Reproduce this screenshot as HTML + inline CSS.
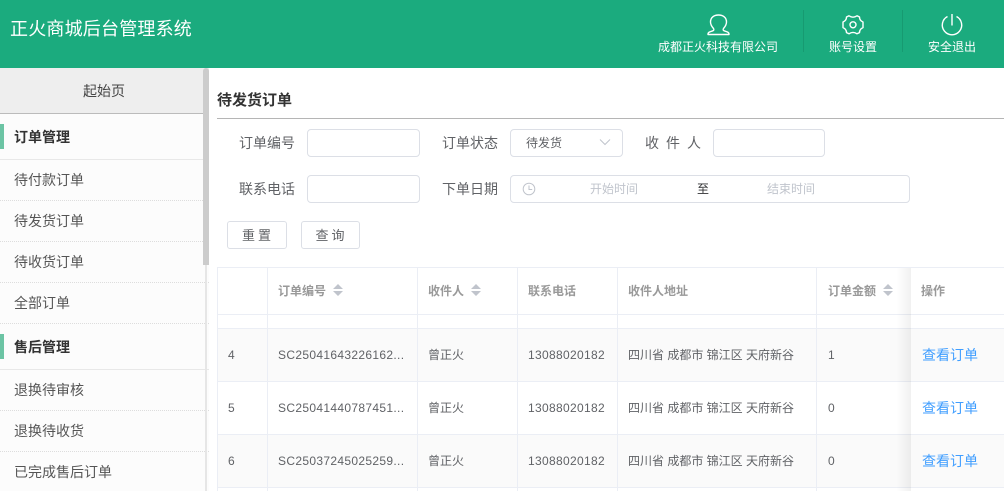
<!DOCTYPE html>
<html lang="zh-CN"><head><meta charset="utf-8"><title>待发货订单</title>
<style>
*{box-sizing:border-box}
html,body{margin:0;padding:0;width:1004px;height:491px;overflow:hidden;background:#fff;font-family:"Liberation Sans","Noto Sans CJK SC",sans-serif;font-size:14px;color:#606266}
.a{position:absolute;white-space:nowrap}
.hd{left:0;top:0;width:1004px;height:68px;background:#1bab7e}
.ht{color:#fff;font-size:12px;line-height:16px;text-align:center;top:39px}
.sep{top:10px;width:1px;height:42px;background:#179a71}
.side{left:0;top:68px;width:209px;height:423px;background:#fcfcfc}
.m{left:14px;font-size:14px;color:#555;line-height:18px}
.g{left:14px;font-size:14px;color:#333;line-height:18px;font-weight:700}
.dot{left:0;width:209px;height:0;border-top:1px dotted #ddd}
.sol{left:0;width:209px;height:1px;background:#e8e8e8}
.bar{left:0;width:4px;height:25px;background:#6cc4a4}
.lb{font-size:14px;color:#606266;line-height:18px}
.ip{background:#fff;border:1px solid #dcdfe6;border-radius:4px;height:28px}
.btn{background:#fff;border:1px solid #dcdfe6;border-radius:3px;height:28px;font-size:13px;color:#606266;line-height:28px;text-align:center;padding-left:2px}
.hl{left:218px;width:786px;height:1px;background:#ebeef5}
.vl{top:267px;width:1px;height:224px;background:#ebeef5}
.th{top:283px;font-size:12px;font-weight:700;color:#999;line-height:17px}
.td{font-size:12px;color:#606266;line-height:17px}
.n{letter-spacing:.33px}
.lk{left:922px;font-size:14px;color:#409eff;line-height:18px}
.so{width:10px;height:14px}
</style></head><body>
<div class="a hd"></div>
<div class="a" style="left:10px;top:17px;color:#fff;font-size:18px;line-height:24px;letter-spacing:.2px">正火商城后台管理系统</div>

<svg class="a" style="left:706px;top:13px" width="26" height="24" viewBox="0 0 26 24" fill="none" stroke="#fff" stroke-width="1.4" stroke-linejoin="round"><path d="M12.500 2C8 2 4.500 4.500 4.500 9C4.500 12 6 13.800 7.500 15.500C8.300 16.500 7.800 17.500 6.800 17.800L3.500 19C2.500 19.500 2 20 2 21V21.500H23V21C23 20 22.500 19.500 21.500 19L18.200 17.800C17.200 17.500 16.700 16.500 17.500 15.500C19 13.800 20.500 12 20.500 9C20.500 4.500 17 2 12.500 2Z"/></svg>
<div class="a ht" style="left:658px;width:120px">成都正火科技有限公司</div>
<div class="a sep" style="left:803px"></div>
<svg class="a" style="left:841px;top:14px" width="24" height="22" viewBox="0 0 24 22" fill="none" stroke="#fff" stroke-width="1.4" stroke-linejoin="round"><path d="M8 1.800Q12 4.500 16 1.800L18.500 3Q18.500 6.500 22 8V13.600Q18.500 15 18.500 18.600L16 19.800Q12 17.100 8 19.800L5.500 18.600Q5.500 15 2 13.600V8Q5.500 6.500 5.500 3Z"/><circle cx="12" cy="10.800" r="3"/></svg>
<div class="a ht" style="left:829px;width:48px">账号设置</div>
<div class="a sep" style="left:902px"></div>
<svg class="a" style="left:940px;top:13px" width="24" height="24" viewBox="0 0 24 24" fill="none" stroke="#fff" stroke-width="1.4"><path d="M7.500 3.500a9.700 9.700 0 1 0 9 0"/><path d="M12 1v11.500"/></svg>
<div class="a ht" style="left:928px;width:48px">安全退出</div>

<div class="a side"></div>
<div class="a" style="left:0;top:68px;width:209px;height:45px;background:#eee"></div>
<div class="a" style="left:0;top:113px;width:209px;height:1px;background:#bbb"></div>
<div class="a" style="left:83px;top:82px;font-size:14px;color:#444;line-height:18px">起始页</div>

<div class="a bar" style="top:124px"></div>
<div class="a g" style="top:128px">订单管理</div>
<div class="a sol" style="top:159px"></div>
<div class="a m" style="top:171px">待付款订单</div>
<div class="a dot" style="top:200px"></div>
<div class="a m" style="top:212px">待发货订单</div>
<div class="a dot" style="top:241px"></div>
<div class="a m" style="top:253px">待收货订单</div>
<div class="a dot" style="top:282px"></div>
<div class="a m" style="top:294px">全部订单</div>
<div class="a dot" style="top:323px"></div>
<div class="a bar" style="top:334px"></div>
<div class="a g" style="top:338px">售后管理</div>
<div class="a sol" style="top:369px"></div>
<div class="a m" style="top:381px">退换待审核</div>
<div class="a dot" style="top:410px"></div>
<div class="a m" style="top:422px">退换待收货</div>
<div class="a dot" style="top:451px"></div>
<div class="a m" style="top:463px">已完成售后订单</div>
<div class="a" style="left:205px;top:265px;width:2px;height:226px;background:#e6e6e6"></div>
<div class="a" style="left:203px;top:68px;width:6px;height:197px;background:#ccc;border-radius:3px 3px 0 0"></div>

<div class="a" style="left:217px;top:92px;font-size:15px;font-weight:700;color:#333;line-height:18px">待发货订单</div>
<div class="a" style="left:217px;top:118px;width:787px;height:1px;background:#b5b5b5"></div>

<div class="a lb" style="left:239px;top:134px">订单编号</div>
<div class="a ip" style="left:307px;top:129px;width:113px"></div>
<div class="a lb" style="left:442px;top:134px">订单状态</div>
<div class="a ip" style="left:510px;top:129px;width:113px"></div>
<div class="a" style="left:526px;top:135px;font-size:12px;color:#606266;line-height:17px">待发货</div>
<svg class="a" style="left:599px;top:138px" width="12" height="8" viewBox="0 0 12 8" fill="none" stroke="#c0c4cc"><path d="M1 1.500l5 5 5-5"/></svg>
<div class="a lb" style="left:645px;top:134px;letter-spacing:7px">收件人</div>
<div class="a ip" style="left:713px;top:129px;width:112px"></div>

<div class="a lb" style="left:239px;top:180px">联系电话</div>
<div class="a ip" style="left:307px;top:175px;width:113px"></div>
<div class="a lb" style="left:442px;top:180px">下单日期</div>
<div class="a ip" style="left:510px;top:175px;width:400px"></div>
<svg class="a" style="left:522px;top:182px" width="14" height="14" viewBox="0 0 14 14" fill="none" stroke="#c0c4cc"><circle cx="7" cy="7" r="5.800"/><path d="M7 3.500V7.500h3.200"/></svg>
<div class="a" style="left:590px;top:181px;font-size:12px;color:#c0c4cc;line-height:17px">开始时间</div>
<div class="a" style="left:697px;top:181px;font-size:12px;color:#303133;line-height:17px">至</div>
<div class="a" style="left:767px;top:181px;font-size:12px;color:#c0c4cc;line-height:17px">结束时间</div>

<div class="a btn" style="left:227px;top:221px;width:60px;letter-spacing:3px">重置</div>
<div class="a btn" style="left:301px;top:221px;width:59px;letter-spacing:3px">查询</div>

<div class="a" style="left:218px;top:329px;width:786px;height:52px;background:#fafafa"></div>
<div class="a" style="left:218px;top:435px;width:786px;height:52px;background:#fafafa"></div>
<div class="a hl" style="top:267px"></div>
<div class="a hl" style="top:314px"></div>
<div class="a hl" style="top:328px"></div>
<div class="a hl" style="top:381px"></div>
<div class="a hl" style="top:434px"></div>
<div class="a hl" style="top:487px"></div>
<div class="a vl" style="left:217px"></div>
<div class="a vl" style="left:267px"></div>
<div class="a vl" style="left:417px"></div>
<div class="a vl" style="left:517px"></div>
<div class="a vl" style="left:617px"></div>
<div class="a vl" style="left:816px"></div>
<div class="a" style="left:896px;top:268px;width:15px;height:223px;background:linear-gradient(to right,rgba(0,0,0,0),rgba(0,0,0,.06))"></div>

<div class="a th" style="left:278px">订单编号</div>
<svg class="a so" style="left:333px;top:283px" viewBox="0 0 10 14" fill="#c0c4cc"><path d="M5 1l5 5H0zM5 13l5-5H0z"/></svg>
<div class="a th" style="left:428px">收件人</div>
<svg class="a so" style="left:471px;top:283px" viewBox="0 0 10 14" fill="#c0c4cc"><path d="M5 1l5 5H0zM5 13l5-5H0z"/></svg>
<div class="a th" style="left:528px">联系电话</div>
<div class="a th" style="left:628px">收件人地址</div>
<div class="a th" style="left:828px">订单金额</div>
<svg class="a so" style="left:883px;top:283px" viewBox="0 0 10 14" fill="#c0c4cc"><path d="M5 1l5 5H0zM5 13l5-5H0z"/></svg>
<div class="a th" style="left:921px">操作</div>

<div class="a td" style="left:228px;top:347px">4</div>
<div class="a td n" style="left:278px;top:347px">SC25041643226162...</div>
<div class="a td" style="left:428px;top:347px">曾正火</div>
<div class="a td n" style="left:528px;top:347px">13088020182</div>
<div class="a td" style="left:628px;top:347px">四川省 成都市 锦江区 天府新谷</div>
<div class="a td" style="left:828px;top:347px">1</div>
<div class="a lk" style="top:346px">查看订单</div>

<div class="a td" style="left:228px;top:400px">5</div>
<div class="a td n" style="left:278px;top:400px">SC25041440787451...</div>
<div class="a td" style="left:428px;top:400px">曾正火</div>
<div class="a td n" style="left:528px;top:400px">13088020182</div>
<div class="a td" style="left:628px;top:400px">四川省 成都市 锦江区 天府新谷</div>
<div class="a td" style="left:828px;top:400px">0</div>
<div class="a lk" style="top:399px">查看订单</div>

<div class="a td" style="left:228px;top:453px">6</div>
<div class="a td n" style="left:278px;top:453px">SC25037245025259...</div>
<div class="a td" style="left:428px;top:453px">曾正火</div>
<div class="a td n" style="left:528px;top:453px">13088020182</div>
<div class="a td" style="left:628px;top:453px">四川省 成都市 锦江区 天府新谷</div>
<div class="a td" style="left:828px;top:453px">0</div>
<div class="a lk" style="top:452px">查看订单</div>
</body></html>
